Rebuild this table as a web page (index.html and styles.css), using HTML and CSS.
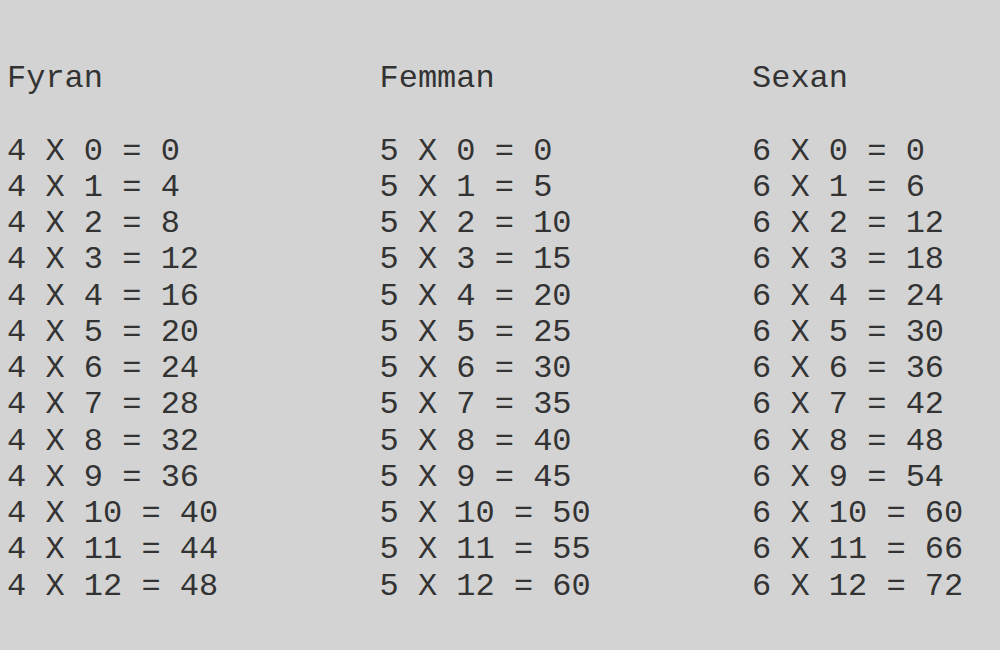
FILE: index.html
```html
<!DOCTYPE html>
<html>
<head>
<meta charset="utf-8">
<link rel="stylesheet" href="styles.css">
</head>
<body>
<div class="tables">
  <section class="table">
    <h2 class="title">Fyran</h2>
    <ul class="rows">
      <li>4 X 0 = 0</li><li>4 X 1 = 4</li><li>4 X 2 = 8</li><li>4 X 3 = 12</li><li>4 X 4 = 16</li><li>4 X 5 = 20</li><li>4 X 6 = 24</li><li>4 X 7 = 28</li><li>4 X 8 = 32</li><li>4 X 9 = 36</li><li>4 X 10 = 40</li><li>4 X 11 = 44</li><li>4 X 12 = 48</li>
    </ul>
  </section>
  <section class="table">
    <h2 class="title">Femman</h2>
    <ul class="rows">
      <li>5 X 0 = 0</li><li>5 X 1 = 5</li><li>5 X 2 = 10</li><li>5 X 3 = 15</li><li>5 X 4 = 20</li><li>5 X 5 = 25</li><li>5 X 6 = 30</li><li>5 X 7 = 35</li><li>5 X 8 = 40</li><li>5 X 9 = 45</li><li>5 X 10 = 50</li><li>5 X 11 = 55</li><li>5 X 12 = 60</li>
    </ul>
  </section>
  <section class="table">
    <h2 class="title">Sexan</h2>
    <ul class="rows">
      <li>6 X 0 = 0</li><li>6 X 1 = 6</li><li>6 X 2 = 12</li><li>6 X 3 = 18</li><li>6 X 4 = 24</li><li>6 X 5 = 30</li><li>6 X 6 = 36</li><li>6 X 7 = 42</li><li>6 X 8 = 48</li><li>6 X 9 = 54</li><li>6 X 10 = 60</li><li>6 X 11 = 66</li><li>6 X 12 = 72</li>
    </ul>
  </section>
</div>
</body>
</html>
```
FILE: styles.css
```css
html, body {
  background: #d3d3d3;
}
body {
  margin: 0;
  padding: 61px 0 0 7px;
  font-family: "Liberation Mono", "Courier New", monospace;
  font-size: 32px;
  line-height: 36.25px;
  color: #333333;
  overflow: hidden;
}
.tables {
  display: grid;
  grid-template-columns: 372.5px 372.5px 1fr;
}
.title {
  margin: 0 0 36.25px 0;
  font-size: inherit;
  font-weight: normal;
}
.rows {
  list-style: none;
  margin: 0;
  padding: 0;
}
.rows li {
  white-space: pre;
}
```
